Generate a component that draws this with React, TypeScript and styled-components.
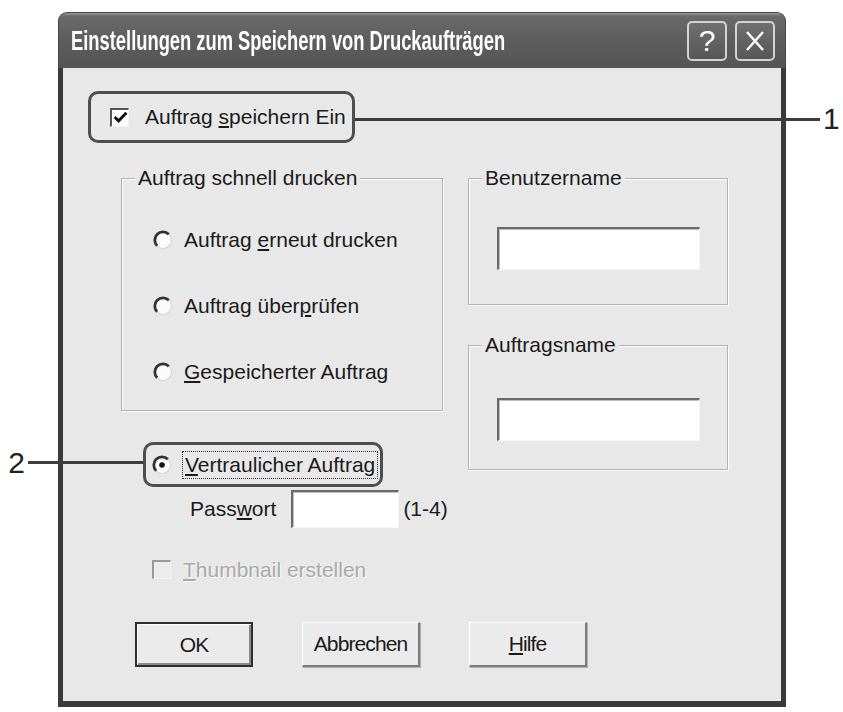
import styled, { createGlobalStyle } from "styled-components";

const GlobalStyle = createGlobalStyle`
  html, body {
    margin: 0;
    padding: 0;
    background: #fff;
    overflow: hidden;
  }
  body {
    font-family: "Liberation Sans", Arial, sans-serif;
    color: #1a1a1a;
  }
`;

const Page = styled.div`
  width: 843px;
  height: 712px;
  box-sizing: border-box;
  padding: 12px 0 0 58px;
`;

const Window = styled.div`
  width: 728px;
  display: flex;
  flex-direction: column;
`;

const TitleBar = styled.div`
  height: 56px;
  box-sizing: border-box;
  display: flex;
  align-items: center;
  padding: 0 10px 0 12px;
  border-radius: 9px 9px 0 0;
  border: 1px solid #474747;
  border-bottom: none;
  background: linear-gradient(#9a9a9a 0, #6a6a6a 3px, #5d5d5d 50%, #555 100%);
`;

const TitleText = styled.div`
  flex: 1 1 0;
  min-width: 0;
  white-space: nowrap;
  color: #fff;
  font-weight: bold;
  font-size: 28px;
  transform: scaleX(0.655);
  transform-origin: left center;
`;

const CaptionButtons = styled.div`
  display: flex;
  gap: 8px;
`;

const CaptionButton = styled.div`
  width: 40px;
  height: 40px;
  box-sizing: border-box;
  border: 2px solid #d2d2d2;
  border-radius: 5px;
  background: linear-gradient(#707070, #575757);
  color: #fff;
  display: grid;
  place-items: center;
  font-size: 30px;
  line-height: 1;
`;

const Body = styled.div`
  height: 639px;
  box-sizing: border-box;
  background: #e8e8e8;
  border: 5px solid #3a3a3a;
  border-top: none;
  border-bottom-width: 6px;
  display: flex;
  flex-direction: column;
  font-size: 21px;
`;

const Highlight = styled.div<{ $w: number; $h: number }>`
  position: relative;
  width: ${(p) => p.$w}px;
  height: ${(p) => p.$h}px;
  box-sizing: border-box;
  border: 3px solid #4e4e4e;
  border-radius: 10px;
  display: flex;
  align-items: center;
`;

const SaveRow = styled(Highlight)`
  margin: 23px 0 0 25px;
  padding-left: 19px;
  gap: 16px;
`;

const Callout = styled.div<{ $side: "left" | "right" }>`
  position: absolute;
  display: flex;
  align-items: center;
  gap: 3px;
  ${(p) =>
    p.$side === "right"
      ? "left: calc(100% + 3px); top: calc(50% + 2px);"
      : "right: calc(100% + 3px); top: calc(50% - 2px); flex-direction: row-reverse;"}
  transform: translateY(-50%);
`;

const CalloutLine = styled.div<{ $w: number }>`
  width: ${(p) => p.$w}px;
  height: 3px;
  background: #3c3c3c;
`;

const CalloutNumber = styled.span`
  font-size: 30px;
  line-height: 1;
  color: #222;
`;

const Columns = styled.div`
  display: flex;
  gap: 25px;
  margin: 23px 0 0 58px;
`;

const Column = styled.div<{ $w: number }>`
  width: ${(p) => p.$w}px;
  display: flex;
  flex-direction: column;
`;

const GroupBox = styled.div<{ $h: number; $mt: number }>`
  margin-top: ${(p) => p.$mt}px;
  height: ${(p) => p.$h}px;
  box-sizing: border-box;
  border: 1px solid #b3b3b3;
  box-shadow: inset 1px 1px 0 #fbfbfb, 1px 1px 0 #fbfbfb;
  display: flex;
  flex-direction: column;
`;

const Legend = styled.div`
  align-self: flex-start;
  margin: -13px 0 0 13px;
  padding: 0 3px;
  background: #e8e8e8;
  line-height: 24px;
`;

const RadioList = styled.div`
  padding: 17px 0 0 31px;
  display: flex;
  flex-direction: column;
`;

const OptionRow = styled.div`
  height: 66px;
  display: flex;
  align-items: center;
  gap: 11px;
`;

const ConfidentialRow = styled(Highlight)`
  margin: 31px 0 0 22px;
  padding-left: 6px;
  gap: 12px;
`;

const FocusLabel = styled.span`
  outline: 1px dotted #333;
  outline-offset: 1px;
  padding: 0 1px;
  line-height: 24px;
`;

const PasswordRow = styled.div`
  height: 38px;
  margin: 3px 0 0 69px;
  display: flex;
  align-items: center;
  white-space: nowrap;
`;

const TextInput = styled.div<{ $w: number; $h: number }>`
  flex-shrink: 0;
  width: ${(p) => p.$w}px;
  height: ${(p) => p.$h}px;
  box-sizing: border-box;
  background: #fff;
  border-top: 2px solid #6a6a6a;
  border-left: 2px solid #6a6a6a;
  border-bottom: 1px solid #f6f6f6;
  border-right: 1px solid #f6f6f6;
  box-shadow: inset 1px 1px 0 #bdbdbd;
`;

const PasswordInput = styled(TextInput)`
  margin-left: 15px;
`;

const Hint = styled.span`
  margin-left: 4px;
`;

const FieldInput = styled(TextInput)<{ $mt: number }>`
  margin: ${(p) => p.$mt}px 0 0 28px;
`;

const ThumbRow = styled.div`
  height: 25px;
  margin: 29px 0 0 31px;
  display: flex;
  align-items: center;
  gap: 12px;
  color: #a9a9a9;
  text-shadow: 1px 1px 0 #fafafa;
`;

const CheckBox = styled.div<{ $disabled?: boolean }>`
  width: 19px;
  height: 19px;
  box-sizing: border-box;
  background: ${(p) => (p.$disabled ? "#ececec" : "#fff")};
  border-top: 2px solid ${(p) => (p.$disabled ? "#9a9a9a" : "#555")};
  border-left: 2px solid ${(p) => (p.$disabled ? "#9a9a9a" : "#555")};
  border-bottom: 1px solid #f4f4f4;
  border-right: 1px solid #f4f4f4;
  display: grid;
  place-items: center;
`;

const ButtonRow = styled.div`
  margin: auto 0 34px 72px;
  display: flex;
  gap: 49px;
`;

const PushButton = styled.div<{ $default?: boolean }>`
  width: 118px;
  height: 45px;
  box-sizing: border-box;
  display: grid;
  place-items: center;
  background: #ebebeb;
  font-size: 21px;
  letter-spacing: -0.9px;
  ${(p) =>
    p.$default
      ? `border: 2px solid #2e2e2e; box-shadow: inset 1px 1px 0 #fff, inset -2px -2px 0 #8a8a8a;`
      : `border-top: 1px solid #fff; border-left: 1px solid #fff;
         border-right: 2px solid #7c7c7c; border-bottom: 2px solid #7c7c7c;
         box-shadow: 1px 1px 0 #b0b0b0;`}
`;

function Radio({ checked }: { checked?: boolean }) {
  return (
    <svg width="20" height="20" viewBox="0 0 20 20" style={{ flexShrink: 0 }}>
      <circle cx="10" cy="10" r="8.5" fill="#fbfbfb" stroke="#d6d6d6" strokeWidth="1.2" />
      <path d="M4.2 15.8 A8.2 8.2 0 0 1 15.8 4.2" fill="none" stroke="#333" strokeWidth="2.8" />
      {checked && <circle cx="10" cy="10" r="2.8" fill="#111" />}
    </svg>
  );
}

function Check() {
  return (
    <svg width="15" height="15" viewBox="0 0 14 14">
      <path d="M1.5 6.5 L5.2 10.2 L12.5 2.5" fill="none" stroke="#111" strokeWidth="2.8" />
    </svg>
  );
}

export default function App() {
  return (
    <Page>
      <GlobalStyle />
      <Window>
        <TitleBar>
          <TitleText>Einstellungen zum Speichern von Druckaufträgen</TitleText>
          <CaptionButtons>
            <CaptionButton>?</CaptionButton>
            <CaptionButton>
              <svg width="22" height="24" viewBox="0 0 22 24">
                <path d="M3 3 L19 21 M19 3 L3 21" stroke="#fff" strokeWidth="2.4" />
              </svg>
            </CaptionButton>
          </CaptionButtons>
        </TitleBar>
        <Body>
          <SaveRow $w={267} $h={52}>
            <CheckBox>
              <Check />
            </CheckBox>
            <span>
              Auftrag <u>s</u>peichern Ein
            </span>
            <Callout $side="right">
              <CalloutLine $w={465} />
              <CalloutNumber>1</CalloutNumber>
            </Callout>
          </SaveRow>

          <Columns>
            <Column $w={322}>
              <GroupBox $h={233} $mt={12}>
                <Legend>Auftrag schnell drucken</Legend>
                <RadioList>
                  <OptionRow>
                    <Radio />
                    <span>
                      Auftrag <u>e</u>rneut drucken
                    </span>
                  </OptionRow>
                  <OptionRow>
                    <Radio />
                    <span>
                      Auftrag über<u>p</u>rüfen
                    </span>
                  </OptionRow>
                  <OptionRow>
                    <Radio />
                    <span>
                      <u>G</u>espeicherter Auftrag
                    </span>
                  </OptionRow>
                </RadioList>
              </GroupBox>

              <ConfidentialRow $w={240} $h={45}>
                <Radio checked />
                <FocusLabel>
                  <u>V</u>ertraulicher Auftrag
                </FocusLabel>
                <Callout $side="left">
                  <CalloutLine $w={115} />
                  <CalloutNumber>2</CalloutNumber>
                </Callout>
              </ConfidentialRow>

              <PasswordRow>
                <span>
                  Pass<u>w</u>ort
                </span>
                <PasswordInput $w={108} $h={38} />
                <Hint>(1-4)</Hint>
              </PasswordRow>

              <ThumbRow>
                <CheckBox $disabled />
                <span>
                  <u>T</u>humbnail erstellen
                </span>
              </ThumbRow>
            </Column>

            <Column $w={260}>
              <GroupBox $h={127} $mt={12}>
                <Legend>Benutzername</Legend>
                <FieldInput $w={203} $h={43} $mt={37} />
              </GroupBox>
              <GroupBox $h={125} $mt={40}>
                <Legend>Auftragsname</Legend>
                <FieldInput $w={203} $h={43} $mt={41} />
              </GroupBox>
            </Column>
          </Columns>

          <ButtonRow>
            <PushButton $default>OK</PushButton>
            <PushButton>Abbrechen</PushButton>
            <PushButton>
              <span>
                <u>H</u>ilfe
              </span>
            </PushButton>
          </ButtonRow>
        </Body>
      </Window>
    </Page>
  );
}
